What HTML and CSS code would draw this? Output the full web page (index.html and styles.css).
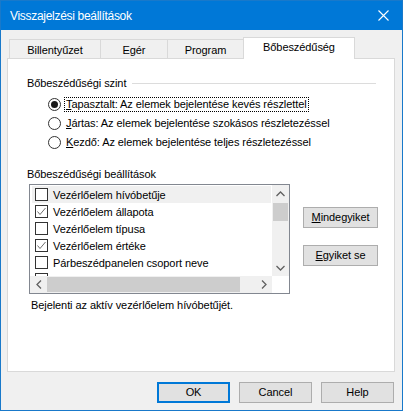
FILE: index.html
```html
<!DOCTYPE html>
<html>
<head>
<meta charset="utf-8">
<link rel="stylesheet" href="styles.css">
</head>
<body>
<div class="window">
  <div class="titlebar">
    <span class="title">Visszajelzési beállítások</span>
    <span class="close"><svg width="11" height="11" viewBox="0 0 11 11"><path d="M0.5 0.5 L10.5 10.5 M10.5 0.5 L0.5 10.5" stroke="#fff" stroke-width="1.1" fill="none"/></svg></span>
  </div>
  <div class="body">
    <div class="tabs">
      <div class="tab w1">Billentyűzet</div>
      <div class="tab w2">Egér</div>
      <div class="tab w3">Program</div>
      <div class="tab active">Bőbeszédűség</div>
    </div>
    <div class="panel">
      <div class="group-head"><span>Bőbeszédűségi szint</span><span class="rule"></span></div>
      <div class="radios">
        <div class="radio"><span class="circle checked"></span><span class="rlabel focus"><u>T</u>apasztalt: Az elemek bejelentése kevés részlettel</span></div>
        <div class="radio"><span class="circle"></span><span class="rlabel"><u>J</u>ártas: Az elemek bejelentése szokásos részletezéssel</span></div>
        <div class="radio"><span class="circle"></span><span class="rlabel"><u>K</u>ezdő: Az elemek bejelentése teljes részletezéssel</span></div>
      </div>
      <div class="section-label">Bőbeszédűségi beállítások</div>
      <div class="list-row">
        <div class="listbox">
          <div class="list-main">
            <div class="items">
              <div class="item hot"><span class="cb"></span>Vezérlőelem hívóbetűje</div>
              <div class="item"><span class="cb"><svg width="11" height="11" viewBox="0 0 11 11"><path d="M1.5 5.5 L4 8.5 L9.5 2" stroke="#6e6e6e" stroke-width="1" fill="none"/></svg></span>Vezérlőelem állapota</div>
              <div class="item"><span class="cb"></span>Vezérlőelem típusa</div>
              <div class="item"><span class="cb"><svg width="11" height="11" viewBox="0 0 11 11"><path d="M1.5 5.5 L4 8.5 L9.5 2" stroke="#6e6e6e" stroke-width="1" fill="none"/></svg></span>Vezérlőelem értéke</div>
              <div class="item"><span class="cb"></span>Párbeszédpanelen csoport neve</div>
              <div class="item"><span class="cb"></span></div>
            </div>
            <div class="vscroll">
              <div class="arrow"><svg width="9" height="6" viewBox="0 0 9 6"><path d="M0.5 5 L4.5 1 L8.5 5" stroke="#606060" stroke-width="1.3" fill="none"/></svg></div>
              <div class="vthumb"></div>
              <div class="vtrack"></div>
              <div class="arrow"><svg width="9" height="6" viewBox="0 0 9 6"><path d="M0.5 1 L4.5 5 L8.5 1" stroke="#606060" stroke-width="1.3" fill="none"/></svg></div>
            </div>
          </div>
          <div class="hscroll">
            <div class="harrow"><svg width="6" height="9" viewBox="0 0 6 9"><path d="M5 0.5 L1 4.5 L5 8.5" stroke="#606060" stroke-width="1.3" fill="none"/></svg></div>
            <div class="hthumb"></div>
            <div class="htrack"></div>
            <div class="harrow"><svg width="6" height="9" viewBox="0 0 6 9"><path d="M1 0.5 L5 4.5 L1 8.5" stroke="#606060" stroke-width="1.3" fill="none"/></svg></div>
            <div class="corner"></div>
          </div>
        </div>
        <div class="side-buttons">
          <div class="btn"><u>M</u>indegyiket</div>
          <div class="btn"><u>E</u>gyiket se</div>
        </div>
      </div>
      <div class="desc">Bejelenti az aktív vezérlőelem hívóbetűjét.</div>
    </div>
    <div class="footer">
      <div class="btn fbtn default">OK</div>
      <div class="btn fbtn">Cancel</div>
      <div class="btn fbtn">Help</div>
    </div>
  </div>
</div>
</body>
</html>
```
FILE: styles.css
```css
* { box-sizing: border-box; }
html, body { margin: 0; padding: 0; background: #f0f0f0; }
body { font-family: "Liberation Sans", Arial, sans-serif; font-size: 11px; color: #000; letter-spacing: -0.08px; }
u { text-decoration: underline; text-underline-offset: 1px; }

.window {
  width: 403px; height: 411px;
  border: 1px solid #1979ca;
  background: #f0f0f0;
  display: flex; flex-direction: column;
}
.titlebar {
  height: 29px; flex: none;
  background: #0078d7; color: #fff;
  display: flex; align-items: center; justify-content: space-between;
  padding: 0 9px 0 9px;
}
.title { font-size: 12px; line-height: 14px; letter-spacing: -0.3px; }
.close { display: flex; width: 11px; height: 11px; margin-right: 4px; }

.body { flex: 1; padding: 7px 7px 7px 6px; display: flex; flex-direction: column; }

.tabs { display: flex; align-items: flex-end; height: 21px; margin-left: 2px; }
.tab {
  height: 19px; border: 1px solid #d9d9d9; border-bottom: none;
  background: #f0f0f0; text-align: center; line-height: 13px; padding-top: 4px;
  margin-right: -1px;
}
.w1 { width: 92px; }
.w2 { width: 68px; }
.w3 { width: 77px; }
.tab.active {
  width: 112px; height: 22px; margin-bottom: -1px; background: #fff;
  padding-top: 3px; position: relative; z-index: 1;
}

.panel {
  height: 314px; width: 388px; flex: none;
  background: #fff; border: 1px solid #d9d9d9;
  padding: 18px 18px 0 19px;
}
.group-head { display: flex; align-items: center; line-height: 13px; height: 13px; }
.group-head .rule { flex: 1; height: 1px; background: #dcdcdc; margin-left: 6px; margin-top: -1px; }

.radios { margin-top: 5px; margin-left: 21px; }
.radio { height: 19px; display: flex; align-items: center; }
.circle {
  width: 13px; height: 13px; border: 1px solid #333; border-radius: 50%;
  background: #fff; flex: none; display: flex; align-items: center; justify-content: center;
}
.circle.checked::after { content: ""; width: 7px; height: 7px; border-radius: 50%; background: #1a1a1a; }
.rlabel { margin-left: 3px; line-height: 13px; padding: 0 1px; border: 1px solid transparent; }
.rlabel.focus { border: 1px dotted #000; }

.section-label { margin-top: 16px; line-height: 13px; }

.list-row { display: flex; align-items: flex-start; margin-top: 3px; margin-left: 2px; }
.listbox { width: 261px; height: 110px; border: 1px solid #828790; background: #fff; display: flex; flex-direction: column; flex: none; }
.list-main { display: flex; height: 91px; overflow: hidden; }
.items { flex: 1; padding-top: 1px; overflow: hidden; }
.item { height: 17px; display: flex; align-items: center; margin-left: 2px; margin-right: 1px; padding-left: 3px; white-space: nowrap; }
.item.hot { background: #f0f0f0; }
.cb { width: 13px; height: 13px; border: 1px solid #333; background: #fff; flex: none; margin-right: 5px; display: flex; }

.vscroll { width: 17px; flex: none; background: #f0f0f0; display: flex; flex-direction: column; }
.arrow { height: 17px; display: flex; align-items: center; justify-content: center; flex: none; }
.vthumb { height: 18px; margin: 1px 1px 0 1px; background: #cdcdcd; flex: none; }
.vtrack { flex: 1; }

.hscroll { height: 17px; display: flex; background: #f0f0f0; }
.harrow { width: 17px; display: flex; align-items: center; justify-content: center; flex: none; }
.hthumb { width: 193px; margin: 1px 0; background: #cdcdcd; flex: none; }
.htrack { flex: 1; }
.corner { width: 17px; background: #fff; flex: none; }

.side-buttons { margin-left: 13px; margin-top: 23px; display: flex; flex-direction: column; gap: 17px; }
.btn {
  width: 75px; height: 21px; border: 1px solid #adadad; background: #e1e1e1;
  display: flex; align-items: center; justify-content: center; line-height: 13px;
}

.desc { margin-top: 5px; margin-left: 4px; line-height: 13px; }

.footer { display: flex; justify-content: flex-end; gap: 9px; margin-top: 10px; padding-right: 1px; }
.fbtn { width: 73px; }
.fbtn.default { border: 2px solid #0078d7; }
```
